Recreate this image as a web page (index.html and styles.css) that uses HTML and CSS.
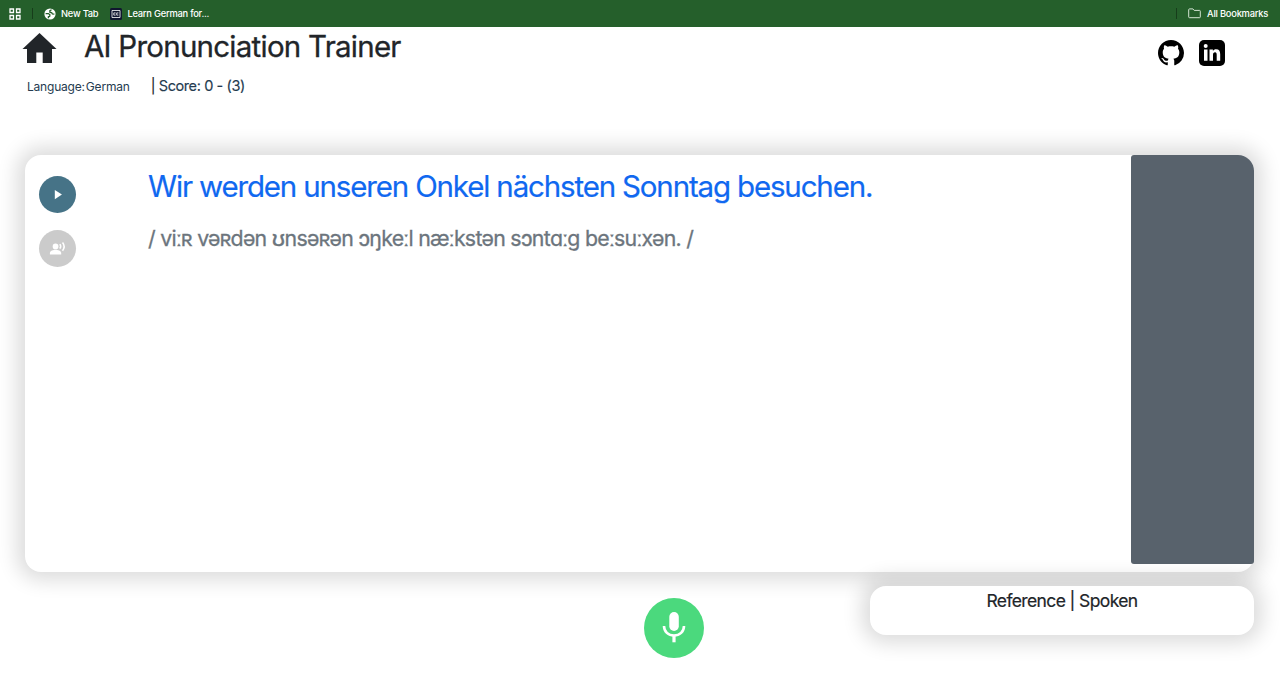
FILE: index.html
```html
<!DOCTYPE html>
<html lang="en">
<head>
    <meta charset="UTF-8">
    <meta name="viewport" content="width=device-width, initial-scale=1.0">
    <title>AI Pronunciation Trainer</title>
    <link rel="stylesheet" href="styles.css">
</head>
<body>

<!-- Bookmarks bar -->
<div class="bookmarks">
    <svg class="apps-icon" viewBox="0 0 12 12" fill="none" stroke="#fff" stroke-width="1.3">
        <path d="M1 1h3.5v3.5H1zM7.5 1H11v3.5H7.5zM1 7.5h3.5V11H1zM7.5 7.5H11V11H7.5z"/>
    </svg>
    <span class="divider"></span>
    <a class="bookmark">
        <svg class="globe-icon" viewBox="0 0 12 12">
            <circle cx="6" cy="6" r="5.6" fill="#fff"/>
            <path d="M7.6 1.8L5.9 2.7v1.5l1.9.6.6 1.2 2 .2M1.6 5.6h2.8l1.5 1.2-.2 1.5-1.3.5v1.4" fill="none" stroke="#255f2b" stroke-width="1.3"/>
        </svg>
        <span>New Tab</span>
    </a>
    <a class="bookmark">
        <svg class="course-icon" viewBox="0 0 12 12">
            <rect width="12" height="12" rx="1.5" fill="#10162f"/>
            <path d="M2 2.5h8v7H2z" fill="none" stroke="#fff" stroke-width=".8"/>
            <path d="M5.6 4.9H3.8v2.2h1.8M8.4 4.9H6.7v2.2h1.7" fill="none" stroke="#fff" stroke-width=".8"/>
        </svg>
        <span>Learn German for...</span>
    </a>
    <div class="all-bookmarks">
        <span class="divider"></span>
        <svg class="folder-icon" viewBox="0 0 13 11" fill="none" stroke="#d3e4d3" stroke-width="1">
            <path d="M1.5.9h3.4l1.300 1.500h5.300a.8.8 0 0 1 .8.8v5.700a.8.8 0 0 1-.8.8h-10a.8.8 0 0 1-.8-.8V1.700a.8.8 0 0 1 .8-.8z"/>
        </svg>
        <span>All Bookmarks</span>
    </div>
</div>

<!-- Title and links -->
<header class="header">
    <svg class="home-icon" viewBox="0 0 34 30"><path d="M17 0L0 16h4.5v14h9.300V19.500h6.400V30h9.300V16H34z" fill="#212529"/></svg>
    <h1>AI Pronunciation Trainer</h1>
    <div class="links">
        <svg class="github" viewBox="0 0 16 16"><path d="M8 0C3.58 0 0 3.58 0 8c0 3.54 2.29 6.53 5.47 7.59.4.07.55-.17.55-.38 0-.19-.01-.82-.01-1.49-2.01.37-2.53-.49-2.69-.94-.09-.23-.48-.94-.82-1.13-.28-.15-.68-.52-.01-.53.63-.01 1.08.58 1.23.82.72 1.21 1.87.87 2.33.66.07-.52.28-.87.51-1.07-1.78-.2-3.64-.89-3.64-3.95 0-.87.31-1.59.82-2.15-.08-.2-.36-1.02.08-2.12 0 0 .67-.21 2.2.82.64-.18 1.32-.27 2-.27s1.36.09 2 .27c1.53-1.04 2.2-.82 2.2-.82.44 1.1.16 1.92.08 2.12.51.56.82 1.27.82 2.15 0 3.07-1.87 3.75-3.65 3.95.29.25.54.73.54 1.48 0 1.07-.01 1.93-.01 2.2 0 .21.15.46.55.38A8.01 8.01 0 0 0 16 8c0-4.42-3.58-8-8-8z"/></svg>
        <svg class="linkedin" viewBox="0 0 26 26">
            <rect width="26" height="26" rx="5"/>
            <path d="M5 9.5h3.500v11.300H5zM10.500 9.500h3.400v1.400c.7-1.100 1.800-1.700 3.200-1.700 3 0 4.100 1.900 4.100 5v6.600h-3.500v-5.900c0-1.600-.4-2.600-1.600-2.600-1.500 0-2.100 1-2.100 2.600v5.900h-3.500z" fill="#fff"/>
            <circle cx="6.7" cy="6" r="2" fill="#fff"/>
        </svg>
    </div>
</header>

<div class="status">
    <span class="language">Language:</span>
    <span class="selected">German</span>
    <span class="score"><span class="bar">|</span> Score: 0 - (3)</span>
</div>

<!-- Sentence card -->
<main class="card">
    <div class="controls">
        <button class="round-btn play" aria-label="Play reference">
            <svg viewBox="0 0 36 36"><path d="M15.4 13.500v9L22.300 18z" fill="#fff"/></svg>
        </button>
        <button class="round-btn voice" aria-label="Play recording">
            <svg viewBox="0 0 36 36">
                <g fill="#fff">
                    <circle cx="16.1" cy="16" r="2.8"/>
                    <path d="M10.600 23.800v-1.500c0-2 3.500-3.100 5.500-3.100s5.500 1.100 5.500 3.100v1.500z"/>
                </g>
                <path d="M20.300 13.700q1.600 2.200 0 4.400M22.900 12.200q3.100 4 0 7.900" fill="none" stroke="#fff" stroke-width="1.5"/>
            </svg>
        </button>
    </div>
    <div class="text">
        <p class="sentence" lang="de">Wir werden unseren Onkel nächsten Sonntag besuchen.</p>
        <p class="ipa">/ viːʀ vəʀdən ʊnsəʀən ɔŋkeːl næːkstən sɔntɑːg beːsuːxən. /</p>
    </div>
    <button class="next-btn" aria-label="Next"></button>
</main>

<!-- Recorder and playback -->
<footer class="footer">
    <button class="mic-btn" aria-label="Record">
        <svg viewBox="0 0 60 60">
            <rect x="25.3" y="14" width="9.5" height="19" rx="4.75" fill="#fff"/>
            <path d="M20 28c0 5.700 4.300 9.500 10 9.500s10-3.800 10-9.500" fill="none" stroke="#fff" stroke-width="2.6"/>
            <path d="M30 37v7.300" stroke="#fff" stroke-width="3.2"/>
        </svg>
    </button>
    <div class="compare">
        <span>Reference | Spoken</span>
    </div>
</footer>

</body>
</html>
```
FILE: styles.css
```css
* {
    box-sizing: border-box;
}
body {
    margin: 0;
    height: 695px;
    overflow: hidden;
    background-color: #fff;
    font-family: Inter, "Liberation Sans", sans-serif;
    color: #212529;
}
svg {
    display: block;
    flex: none;
}
button {
    border: none;
    padding: 0;
    cursor: pointer;
}
.bookmarks {
    display: flex;
    align-items: center;
    height: 27px;
    padding: 0 12px 0 9px;
    background-color: #255f2b;
    color: #fff;
    font-size: 9.3px;
    font-weight: 500;
    letter-spacing: -0.22px;
}
.apps-icon {
    width: 12px;
    height: 12px;
}
.divider {
    width: 1px;
    height: 11px;
    margin: 0 11px;
    background-color: #173d1b;
}
.bookmark {
    display: flex;
    align-items: center;
    gap: 5px;
    margin-right: 12px;
}
.globe-icon,
.course-icon {
    width: 12px;
    height: 12px;
}
.all-bookmarks {
    display: flex;
    align-items: center;
    margin-left: auto;
}
.folder-icon {
    width: 13px;
    height: 11px;
    margin-right: 6px;
}
.header {
    display: flex;
    height: 44px;
    padding: 0 55px 0 22px;
}
.home-icon {
    width: 35px;
    height: 30px;
    margin-top: 6px;
}
h1 {
    margin: 1px 0 0 27px;
    font-size: 29.5px;
    line-height: 36px;
    font-weight: 400;
    letter-spacing: -0.75px;
    white-space: nowrap;
    -webkit-text-stroke: 0.3px;
}
.links {
    display: flex;
    gap: 15px;
    margin: 13px 0 0 auto;
}
.github,
.linkedin {
    width: 26px;
    height: 26px;
}
.status {
    display: flex;
    align-items: baseline;
    height: 84px;
    padding: 6px 0 0 27px;
    color: #253b50;
    font-size: 12px;
    letter-spacing: -0.2px;
    white-space: nowrap;
}
.selected {
    margin-left: 1px;
}
.score {
    margin-left: 21px;
    font-size: 14.5px;
    letter-spacing: -0.4px;
    -webkit-text-stroke: 0.15px;
}
.bar {
    color: #212529;
}
.card {
    display: flex;
    height: 417px;
    margin: 0 26px 0 25px;
    border-radius: 16px;
    background-color: #fff;
    box-shadow: 0 0 20px 8px rgba(0, 0, 0, 0.14);
}
.controls {
    display: flex;
    flex-direction: column;
    gap: 17px;
    width: 123px;
    padding: 21px 0 0 14px;
}
.round-btn {
    width: 37px;
    height: 37px;
    border-radius: 50%;
}
.play {
    background-color: #467387;
}
.voice {
    background-color: #cbcbcb;
}
.text {
    padding-top: 13px;
}
.text p {
    margin: 0;
    white-space: nowrap;
}
.sentence {
    color: #1068f0;
    font-size: 29.5px;
    line-height: 36px;
    letter-spacing: -1.16px;
    -webkit-text-stroke: 0.2px;
}
.text .ipa {
    margin-top: 18px;
    color: #6c757d;
    font-size: 21.3px;
    line-height: 32px;
    letter-spacing: -0.7px;
    -webkit-text-stroke: 0.3px;
}
.next-btn {
    width: 123px;
    height: 409px;
    margin-left: auto;
    border-radius: 3px 16px 3px 3px;
    background-color: #58626c;
}
.footer {
    display: flex;
    justify-content: flex-end;
    padding: 14px 26px 0 0;
}
.mic-btn {
    width: 60px;
    height: 60px;
    margin: 12px 166px 0 0;
    border-radius: 50%;
    background-color: #4bd97d;
}
.compare {
    width: 384px;
    height: 49px;
    padding-top: 3px;
    border-radius: 16px;
    background-color: #fff;
    box-shadow: 0 0 20px 8px rgba(0, 0, 0, 0.14);
    font-size: 17.5px;
    line-height: 24px;
    text-align: center;
    letter-spacing: -0.62px;
    -webkit-text-stroke: 0.2px;
}
```
